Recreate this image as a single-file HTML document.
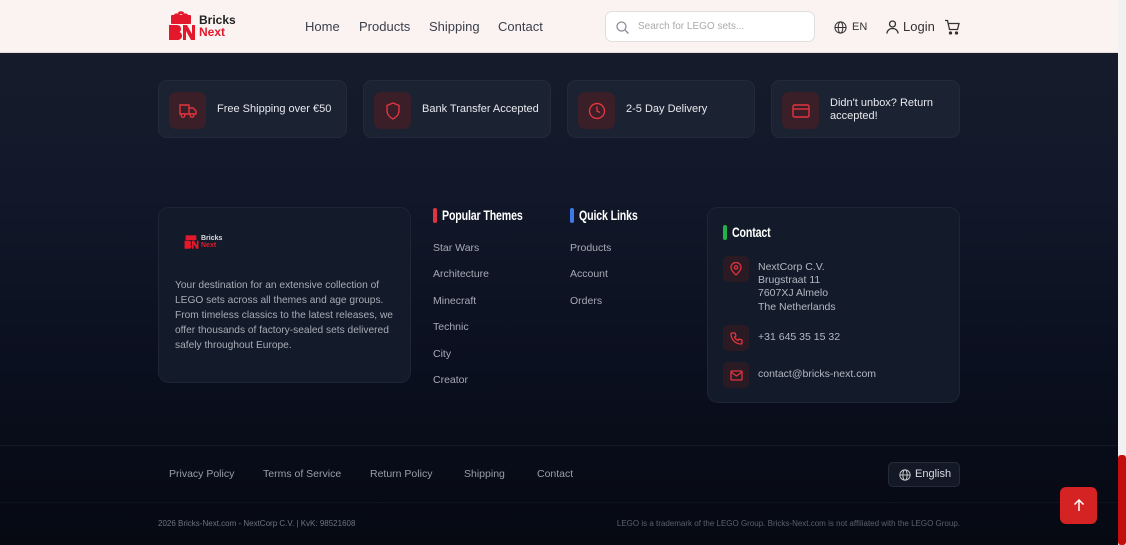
<!DOCTYPE html>
<html><head><meta charset="utf-8"><style>
*{box-sizing:border-box;margin:0;padding:0}
body{width:1126px;height:545px;overflow:hidden;font-family:"Liberation Sans",sans-serif;position:relative;background:linear-gradient(180deg,#171d2c 0%,#121829 35%,#0b1020 65%,#060912 100%)}
.hdr{position:absolute;left:0;top:0;width:1118px;height:53px;background:#fbf3f2;border-bottom:1px solid #e6dcdc}
.abs{position:absolute}
.nav a{position:absolute;top:19px;font-size:13px;color:#3b3f4a;text-decoration:none}
.search{left:605px;top:11px;width:210px;height:31px;border:1px solid #e3dede;border-radius:7px;background:#fff}
.card{position:absolute;top:80px;height:58px;background:#1b2232;border:1px solid #232a3a;border-radius:9px}
.ic{position:absolute;left:10px;top:11px;width:37px;height:37px;border-radius:7px;background:#3a1f28;display:flex;align-items:center;justify-content:center}
.card span{position:absolute;left:58px;top:22px;font-size:11px;color:#e8e9ee;line-height:13px}
.box{position:absolute;background:#131a29;border:1px solid #1e2535;border-radius:11px}
.h{position:absolute;font-size:14px;font-weight:bold;color:#fff;transform:scaleX(.76);transform-origin:0 0;letter-spacing:-.2px}
.bar{position:absolute;width:4px;height:15px;border-radius:2px}
.lk{position:absolute;font-size:10.5px;color:#a6aab5}
.ci{position:absolute;left:15px;width:26px;height:26px;border-radius:5px;background:#2a1a24;display:flex;align-items:center;justify-content:center}
.ct{position:absolute;left:50px;font-size:10.5px;color:#b4b8c2;line-height:13.2px}
.fl{position:absolute;top:468px;font-size:10.5px;color:#9a9eaa}
</style></head><body>
<div class="hdr">
 <svg class="abs" style="left:168px;top:11px" width="28" height="31" viewBox="0 0 28 31"><g fill="#e3192b"><rect x="3" y="4" width="20" height="9" rx="1"/><ellipse cx="9" cy="4" rx="3" ry="1.6"/><ellipse cx="17" cy="4" rx="3" ry="1.6"/><ellipse cx="13" cy="1.8" rx="3" ry="1.5"/><path d="M1 14h8c3 0 4 2 4 4s-1 3-2 3c2 0 3 2 3 4s-2 4-4 4H1zM15 14h4l5 9v-9h3v15h-4l-5-9v9h-3z"/></g></svg>
 <div class="abs" style="left:199px;top:14px;font-size:12px;font-weight:bold;color:#222;line-height:12px">Bricks<br><span style="color:#e3192b">Next</span></div>
 <div class="nav"><a style="left:305px">Home</a><a style="left:359px">Products</a><a style="left:429px">Shipping</a><a style="left:498px">Contact</a></div>
 <div class="abs search"><svg class="abs" style="left:10px;top:9px" width="13" height="13" viewBox="0 0 13 13" fill="none" stroke="#8a8e98" stroke-width="1.3"><circle cx="5.5" cy="5.5" r="4.5"/><path d="M9 9l3.5 3.5"/></svg><span class="abs" style="left:32px;top:9px;font-size:10px;color:#aaa">Search for LEGO sets...</span></div>
 <svg class="abs" style="left:834px;top:21px" width="13" height="13" viewBox="0 0 14 14" fill="none" stroke="#333" stroke-width="1.1"><circle cx="7" cy="7" r="6"/><ellipse cx="7" cy="7" rx="2.5" ry="6"/><path d="M1 7h12"/></svg>
 <span class="abs" style="left:852px;top:21px;font-size:11px;color:#333">EN</span>
 <svg class="abs" style="left:886px;top:20px" width="13" height="14" viewBox="0 0 13 14" fill="none" stroke="#333" stroke-width="1.3"><circle cx="6.5" cy="4" r="3"/><path d="M1 13.5c0-3 2.5-5 5.5-5s5.5 2 5.5 5"/></svg>
 <span class="abs" style="left:903px;top:19px;font-size:13px;color:#333">Login</span>
 <svg class="abs" style="left:944px;top:19px" width="16" height="16" viewBox="0 0 16 16" fill="none" stroke="#333" stroke-width="1.3"><path d="M1 1.5h2.5l2 9h8l1.5-6H4.5"/><circle cx="6.5" cy="14" r="1" fill="#333"/><circle cx="12.5" cy="14" r="1" fill="#333"/></svg>
</div>

<div class="card" style="left:158px;width:189px"><div class="ic"><svg width="18" height="16" viewBox="0 0 18 16" fill="none" stroke="#e2343f" stroke-width="1.4"><path d="M1 2h9v9H1zM10 5h4l3 3v3h-7"/><circle cx="4" cy="12.5" r="1.8" fill="#3a1f28"/><circle cx="13" cy="12.5" r="1.8" fill="#3a1f28"/></svg></div><span>Free Shipping over €50</span></div>
<div class="card" style="left:363px;width:188px"><div class="ic"><svg width="16" height="18" viewBox="0 0 16 18" fill="none" stroke="#e2343f" stroke-width="1.4"><path d="M8 1l6 2.5v5c0 4-3 7-6 8.5-3-1.5-6-4.5-6-8.5v-5z"/></svg></div><span>Bank Transfer Accepted</span></div>
<div class="card" style="left:567px;width:188px"><div class="ic"><svg width="18" height="18" viewBox="0 0 18 18" fill="none" stroke="#e2343f" stroke-width="1.4"><circle cx="9" cy="9" r="7.5"/><path d="M9 4.5V9l3 1.5"/></svg></div><span>2-5 Day Delivery</span></div>
<div class="card" style="left:771px;width:189px"><div class="ic"><svg width="18" height="14" viewBox="0 0 18 14" fill="none" stroke="#e2343f" stroke-width="1.4"><rect x="1" y="1" width="16" height="12" rx="1.5"/><path d="M1 5h16"/></svg></div><span style="top:16px">Didn't unbox? Return<br>accepted!</span></div>

<div class="box" style="left:158px;top:207px;width:253px;height:176px">
 <svg class="abs" style="left:25px;top:25px" width="15" height="17" viewBox="0 0 28 31"><g fill="#e3192b"><rect x="3" y="4" width="20" height="9"/><path d="M1 14h8c3 0 4 2 4 4s-1 3-2 3c2 0 3 2 3 4s-2 4-4 4H1zM15 14h4l5 9v-9h3v15h-4l-5-9v9h-3z"/></g></svg>
 <div class="abs" style="left:42px;top:27px;font-size:7px;font-weight:bold;color:#ddd;line-height:7px">Bricks<br><span style="color:#e3192b">Next</span></div>
 <div class="abs" style="left:16px;top:70px;width:230px;font-size:10.2px;line-height:15px;color:#a8acb6">Your destination for an extensive collection of LEGO sets across all themes and age groups. From timeless classics to the latest releases, we offer thousands of factory-sealed sets delivered safely throughout Europe.</div>
</div>

<div class="bar" style="left:433px;top:208px;background:#e2343f"></div><div class="h" style="left:442px;top:207px">Popular Themes</div>
<div class="lk" style="left:433px;top:242px">Star Wars</div><div class="lk" style="left:433px;top:268px">Architecture</div><div class="lk" style="left:433px;top:295px">Minecraft</div><div class="lk" style="left:433px;top:321px">Technic</div><div class="lk" style="left:433px;top:348px">City</div><div class="lk" style="left:433px;top:374px">Creator</div>
<div class="bar" style="left:570px;top:208px;background:#3b7ae8"></div><div class="h" style="left:579px;top:207px">Quick Links</div>
<div class="lk" style="left:570px;top:242px">Products</div><div class="lk" style="left:570px;top:268px">Account</div><div class="lk" style="left:570px;top:295px">Orders</div>

<div class="box" style="left:707px;top:207px;width:253px;height:196px">
 <div class="bar" style="left:15px;top:17px;background:#22b24c"></div><div class="h" style="left:24px;top:16px">Contact</div>
 <div class="ci" style="top:48px"><svg width="12" height="14" viewBox="0 0 12 14" fill="none" stroke="#e2343f" stroke-width="1.3"><path d="M6 13s5-4.5 5-7.5A5 5 0 0 0 1 5.5C1 8.5 6 13 6 13z"/><circle cx="6" cy="5.5" r="1.7"/></svg></div>
 <div class="ct" style="top:53px">NextCorp C.V.<br>Brugstraat 11<br>7607XJ Almelo<br>The Netherlands</div>
 <div class="ci" style="top:117px"><svg width="13" height="13" viewBox="0 0 13 13" fill="none" stroke="#e2343f" stroke-width="1.3"><path d="M2 1h3l1 3-1.5 1a7 7 0 0 0 3.5 3.5L9 7l3 1v3a1 1 0 0 1-1 1C5.5 12 1 7.5 1 2a1 1 0 0 1 1-1z"/></svg></div>
 <div class="ct" style="top:123px">+31 645 35 15 32</div>
 <div class="ci" style="top:154px"><svg width="13" height="11" viewBox="0 0 13 11" fill="none" stroke="#e2343f" stroke-width="1.3"><rect x="1" y="1" width="11" height="9" rx="1"/><path d="M1 2l5.5 4L12 2"/></svg></div>
 <div class="ct" style="top:160px">contact@bricks-next.com</div>
</div>

<div class="abs" style="left:0;top:445px;width:1118px;height:1px;background:#141a28"></div>
<div class="fl" style="left:169px">Privacy Policy</div><div class="fl" style="left:263px">Terms of Service</div><div class="fl" style="left:370px">Return Policy</div><div class="fl" style="left:464px">Shipping</div><div class="fl" style="left:537px">Contact</div>
<div class="abs" style="left:888px;top:462px;width:72px;height:25px;border:1px solid #242b39;border-radius:5px;background:#121826"><svg class="abs" style="left:10px;top:6px" width="12" height="12" viewBox="0 0 14 14" fill="none" stroke="#ccc" stroke-width="1.1"><circle cx="7" cy="7" r="6"/><ellipse cx="7" cy="7" rx="2.5" ry="6"/><path d="M1 7h12"/></svg><span class="abs" style="left:26px;top:5px;font-size:11px;color:#d8dae0">English</span></div>
<div class="abs" style="left:0;top:502px;width:1118px;height:1px;background:#0e1320"></div>
<div class="abs" style="left:158px;top:519px;font-size:8px;color:#6f7380">2026 Bricks-Next.com - NextCorp C.V. | KvK: 98521608</div>
<div class="abs" style="right:166px;top:519px;font-size:8px;color:#5c606c">LEGO is a trademark of the LEGO Group. Bricks-Next.com is not affiliated with the LEGO Group.</div>
<div class="abs" style="left:1060px;top:487px;width:37px;height:37px;border-radius:6px;background:#d52222;display:flex;align-items:center;justify-content:center"><svg width="12" height="13" viewBox="0 0 12 13" fill="none" stroke="#fff" stroke-width="1.5"><path d="M6 12V1M1.5 5.5L6 1l4.5 4.5"/></svg></div>
<div class="abs" style="left:1118px;top:0;width:8px;height:545px;background:#f1f1f1"></div>
<div class="abs" style="left:1118px;top:455px;width:8px;height:90px;background:#c40d0d;border-radius:3px"></div>
</body></html>
